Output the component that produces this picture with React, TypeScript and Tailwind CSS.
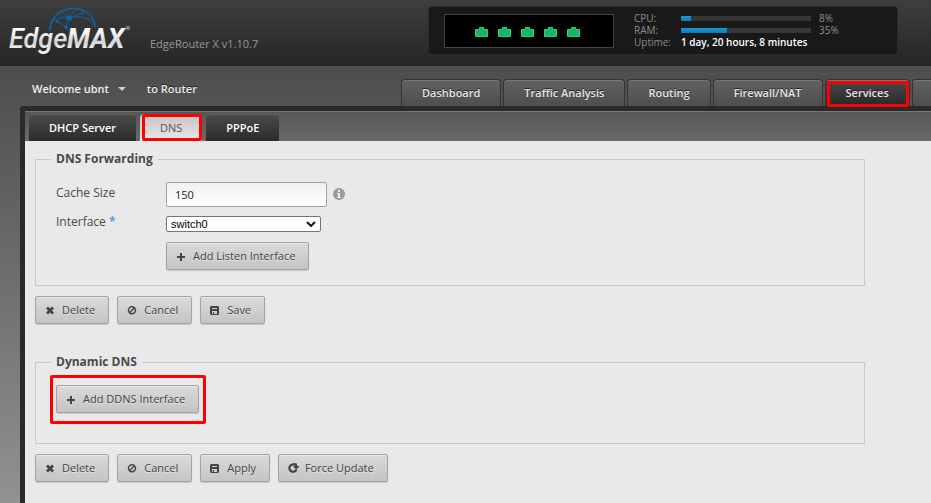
import { type ReactNode } from "react";

const NAV = ["Dashboard", "Traffic Analysis", "Routing", "Firewall/NAT", "Services", "Users"];
const SUB_TABS = ["DHCP Server", "DNS", "PPPoE"];
const PORTS = ["eth0", "eth1", "eth2", "eth3", "eth4"];

function Highlight({ className }: { className: string }) {
  return (
    <span
      aria-hidden="true"
      className={`pointer-events-none absolute rounded-xs border-3 border-[#ff0000] ${className}`}
    />
  );
}

function Logo() {
  return (
    <svg width="124" height="56" viewBox="0 0 124 56" role="img" aria-label="EdgeMAX">
      <defs>
        <linearGradient id="metal" x1="0" y1="0" x2="0" y2="1">
          <stop offset="0.2" stopColor="#ffffff" />
          <stop offset="0.6" stopColor="#d2d3d5" />
          <stop offset="0.85" stopColor="#f4f4f4" />
        </linearGradient>
      </defs>
      <g fill="none" stroke="#0a65a8" strokeWidth="0.9">
        <path d="M42 31C42 18 51 9 65 8.500c12 0 22 7 22 19" strokeWidth="1.6" />
        <path d="M44 22C50 17 56 17 61 18C70 15 80 18 86 23" />
        <path d="M61 18L68 9M61 18L75 13M61 18L54 12M61 18L58 27L48 21M58 27L62 31" />
      </g>
      <g fill="#0a65a8">
        <circle cx="61" cy="18" r="2.800" />
        <circle cx="58" cy="27" r="1.800" />
        <circle cx="49" cy="21" r="1.500" />
        <circle cx="75" cy="13" r="1.200" />
      </g>
      <g fontStyle="italic" fontFamily="Roboto, 'Liberation Sans', sans-serif" fill="url(#metal)">
        <text x="1" y="48" fontSize="27" fontWeight="500">
          Edge
        </text>
        <text x="59" y="48" fontSize="27" fontWeight="700">
          MAX
        </text>
      </g>
      <g fill="none" stroke="#b4b4b4" strokeWidth="0.6">
        <circle cx="120" cy="28" r="1.900" />
        <path d="M119.500 29v-2h1v1h-1l1 1" />
      </g>
    </svg>
  );
}

function Port({ name }: { name: string }) {
  return (
    <svg width="13" height="10" viewBox="0 0 13 10" role="img" aria-label={name}>
      <path d="M.5 9.500v-7h4v-2h4v2h4v7z" fill="#17b566" stroke="#2bd282" />
    </svg>
  );
}

function Meter({ label, value, fill }: { label: string; value: string; fill: string }) {
  return (
    <>
      <dt>{label}</dt>
      <dd className="flex items-center gap-2">
        <span className="h-[5px] w-[130px] bg-[#363636]">
          <span className={`block h-full bg-linear-to-b from-[#1896d4] to-[#087cbc] ${fill}`} />
        </span>
        {value}
      </dd>
    </>
  );
}

function PlusIcon() {
  return (
    <svg width="10" height="10" viewBox="0 0 10 10" aria-hidden="true">
      <path d="M1 6h8M5 2v8" stroke="#444" strokeWidth="2" />
    </svg>
  );
}

function CrossIcon() {
  return (
    <svg width="10" height="10" viewBox="0 0 10 10" aria-hidden="true">
      <path d="M2 2.500l6 6M8 2.500l-6 6" stroke="#444" strokeWidth="2.800" />
    </svg>
  );
}

function BanIcon() {
  return (
    <svg width="10" height="10" viewBox="0 0 10 10" aria-hidden="true">
      <circle cx="5" cy="5.200" r="3.500" fill="none" stroke="#444" strokeWidth="1.500" />
      <path d="M2.500 7.700l5-5" stroke="#444" strokeWidth="1.500" />
    </svg>
  );
}

function DiskIcon() {
  return (
    <svg width="10" height="10" viewBox="0 0 10 10" aria-hidden="true">
      <path
        d="M1 1h7l1 1v7l-1 1H1L0 9V2zM2 3v1h5V3zM2 6v3h1V7h1v2h3V6z"
        fill="#444"
        fillRule="evenodd"
      />
    </svg>
  );
}

function RefreshIcon() {
  return (
    <svg width="10" height="10" viewBox="0 0 10 10" className="overflow-visible" aria-hidden="true">
      <path d="M6.500 1.700A3.700 3.700 0 1 0 8.500 6.500" fill="none" stroke="#444" strokeWidth="2.200" />
      <path d="M5.500 0L9 .5V3h2.500L8.500 6.500L5 3.500L7 3z" fill="#444" />
    </svg>
  );
}

function Button({ icon, children }: { icon: ReactNode; children: ReactNode }) {
  return (
    <button
      type="button"
      className="flex h-7 items-center gap-[7px] rounded-xs border border-[#a3a3a3] bg-linear-to-b from-[#dadada] to-[#c4c4c4] pr-[13px] pl-[9px] text-[11px] text-[#444] text-shadow-[0_1px_0_#e4e4e4] shadow-[0_1px_1px_rgba(0,0,0,0.15),inset_0_1px_0_#e8e8e8]"
    >
      {icon}
      {children}
    </button>
  );
}

function Section({ title, className, children }: { title: string; className: string; children: ReactNode }) {
  return (
    <fieldset className={`border border-[#c9c9c9] px-5 ${className}`}>
      <legend className="-ml-[5px] px-[5px] font-bold">{title}</legend>
      {children}
    </fieldset>
  );
}

export default function App() {
  return (
    <div className="flex min-h-screen flex-col overflow-hidden bg-linear-to-b from-[#444] to-[#929292] font-['Open_Sans','Noto_Sans',sans-serif] text-xs leading-4">
      <header className="flex h-[66px] shrink-0 items-start justify-between bg-linear-to-b from-[#3e3e3e] to-[#262626] pr-[33px] pl-2">
        <div className="flex">
          <Logo />
          <p className="mt-9 ml-[18px] text-[11px] text-[#999]">EdgeRouter X v1.10.7</p>
        </div>
        <div className="mt-[6px] flex h-[49px] w-[470px] rounded-sm border border-[#2b2b2b] bg-[#191919] pt-[7px] pl-[15px]">
          <div className="flex h-[34px] w-[170px] items-center justify-center gap-[10px] border border-[#444] bg-black pt-0.5 pr-1">
            {PORTS.map((p) => (
              <Port key={p} name={p} />
            ))}
          </div>
          <dl className="-mt-[2px] ml-5 grid h-9 grid-cols-[47px_auto] text-[10px] leading-3 text-[#8c8c8c]">
            <Meter label="CPU:" value="8%" fill="w-[8%]" />
            <Meter label="RAM:" value="35%" fill="w-[35%]" />
            <dt>Uptime:</dt>
            <dd className="font-semibold text-white">1 day, 20 hours, 8 minutes</dd>
          </dl>
        </div>
      </header>

      <div className="flex h-10 shrink-0 items-end text-white">
        <div className="flex w-[401px] shrink-0 gap-[21px] pb-[9px] pl-8 font-semibold text-[#eee] text-shadow-[0_-1px_0_#222] text-[11px]">
          <button type="button" className="flex items-center gap-[9px]">
            Welcome ubnt
            <span className="border-x-4 border-t-4 border-x-transparent border-t-[#ccc]" />
          </button>
          <span>to Router</span>
        </div>
        <nav className="flex gap-0.5">
          {NAV.map((name) => {
            const on = name === "Services";
            return (
              <a
                key={name}
                href="#"
                aria-current={on ? "page" : undefined}
                className={`relative flex h-[27px] shrink-0 items-center rounded-t-sm border border-b-0 border-[#333] px-5 text-[11px] font-semibold text-[#e6e6e6] text-shadow-[0_-1px_0_#222] shadow-[inset_0_1px_0_#777] bg-linear-to-b ${
                  on ? "from-[#4a4a4a] to-[#292929]" : "from-[#626262] to-[#4e4e4e]"
                }`}
              >
                {name}
                {on && <Highlight className="top-px right-0 -bottom-px left-px z-10" />}
              </a>
            );
          })}
        </nav>
      </div>

      <div className="ml-5 flex grow flex-col rounded-tl-sm border-t-5 border-l-5 border-[#2a2a2a] bg-[#e9e9e9]">
        <nav className="flex h-[30px] items-end gap-1 border-t border-[#777] bg-linear-to-b from-[#575757] to-[#6a6a6a] pl-1">
          {SUB_TABS.map((name) => {
            const on = name === "DNS";
            return (
              <a
                key={name}
                href="#"
                aria-current={on ? "page" : undefined}
                className={`relative flex h-[27px] items-center rounded-t-sm bg-linear-to-b px-5 text-[11px] ${
                  on
                    ? "from-[#c4c4c4] to-[#e9e9e9] text-[#555]"
                    : "from-[#4c4c4c] to-[#2b2b2b] font-semibold text-white shadow-[inset_0_1px_0_#5f5f5f]"
                }`}
              >
                {name}
                {on && <Highlight className="top-0 right-0 bottom-0 left-0.5" />}
              </a>
            );
          })}
        </nav>

        <main className="flex flex-col px-[10px] pt-[10px] pb-5 text-[#4a4a4a]">
          <Section title="DNS Forwarding" className="h-[135px] max-w-[830px]">
            <div className="grid grid-cols-[110px_auto] justify-start pt-[15px]">
              <label htmlFor="cache" className="pt-[3px]">
                Cache Size
              </label>
              <div className="flex h-[34px] items-start gap-[6px]">
                <input
                  id="cache"
                  defaultValue="150"
                  className="h-[25px] w-[161px] rounded-xs border border-[#a3a3a3] bg-linear-to-b from-[#f0f0f0] to-white px-2 text-[11px] text-[#222]"
                />
                <svg width="12" height="12" viewBox="0 0 12 12" className="mt-[6px]" role="img" aria-label="Info">
                  <circle cx="6" cy="6" r="6" fill="#9a9a9a" />
                  <path d="M5 2h2v2H5zM4 5h3v4h1v1H4V9h1V6H4z" fill="#eee" />
                </svg>
              </div>
              <label htmlFor="iface" className="-mt-[2px]">
                Interface <span className="font-bold text-[#5a9fd4]">*</span>
              </label>
              <div className="relative flex h-[26px] w-[155px] items-start">
                <select
                  id="iface"
                  className="h-4 w-full appearance-none rounded-xs border border-[#767676] bg-white px-1 font-['Liberation_Sans',Arial,sans-serif] text-[11px] leading-[14px] text-black"
                >
                  <option>switch0</option>
                </select>
                <svg
                  width="10"
                  height="6"
                  viewBox="0 0 10 6"
                  className="pointer-events-none absolute top-[5px] right-[5px]"
                  aria-hidden="true"
                >
                  <path d="M1 1l4 4l4-4" fill="none" stroke="#111" strokeWidth="2" />
                </svg>
              </div>
              <div className="col-start-2 flex">
                <Button icon={<PlusIcon />}>Add Listen Interface</Button>
              </div>
            </div>
          </Section>
          <div className="mt-[10px] flex gap-2">
            <Button icon={<CrossIcon />}>Delete</Button>
            <Button icon={<BanIcon />}>Cancel</Button>
            <Button icon={<DiskIcon />}>Save</Button>
          </div>

          <Section title="Dynamic DNS" className="mt-[30px] h-[90px] max-w-[830px]">
            <div className="flex pt-[15px]">
              <div className="relative">
                <Button icon={<PlusIcon />}>Add DDNS Interface</Button>
                <Highlight className="-top-[10px] -right-[7px] -bottom-[11px] -left-[6px]" />
              </div>
            </div>
          </Section>
          <div className="mt-[10px] flex gap-2">
            <Button icon={<CrossIcon />}>Delete</Button>
            <Button icon={<BanIcon />}>Cancel</Button>
            <Button icon={<DiskIcon />}>Apply</Button>
            <Button icon={<RefreshIcon />}>Force Update</Button>
          </div>
        </main>
      </div>
    </div>
  );
}
